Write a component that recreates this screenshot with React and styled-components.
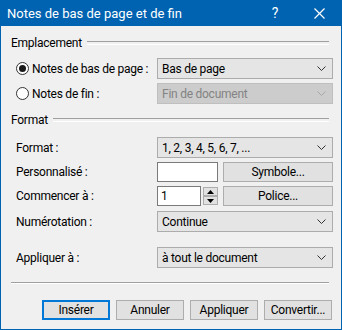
import React from "react";
import styled, { createGlobalStyle } from "styled-components";

const GlobalStyle = createGlobalStyle`
  html, body {
    margin: 0;
    padding: 0;
    background: #f0f0f0;
  }
  * {
    box-sizing: border-box;
  }
`;

const Fenetre = styled.div`
  width: 342px;
  height: 330px;
  background: #f0f0f0;
  border: 1px solid #0063b1;
  border-top: none;
  font-family: Roboto, "Noto Sans", sans-serif;
  font-size: 12px;
  letter-spacing: -0.25px;
  color: #000;
  display: flex;
  flex-direction: column;
`;

const BarreTitre = styled.div`
  height: 26px;
  margin: 0 -1px;
  background: #0063b1;
  color: #fff;
  display: flex;
  align-items: center;
  padding-left: 7px;
  font-size: 13px;
  letter-spacing: 0;
`;

const Titre = styled.span`
  flex: 1;
`;

const BoutonTitre = styled.div`
  width: ${(p) => p.$w}px;
  height: 26px;
  display: flex;
  align-items: center;
  justify-content: center;
  color: #fff;
  font-size: 14px;
`;

const Corps = styled.div`
  padding: 0 8px 0 10px;
  display: flex;
  flex-direction: column;
`;

const EnteteGroupe = styled.div`
  height: 14px;
  margin-top: ${(p) => p.$mt}px;
  margin-right: 4px;
  display: flex;
  align-items: center;
  gap: 5px;
  &::after {
    content: "";
    flex: 1;
    height: 2px;
    border-top: 1px solid #a0a0a0;
    border-bottom: 1px solid #ffffff;
  }
`;

const Ligne = styled.div`
  height: ${(p) => p.$h || 20}px;
  margin-top: ${(p) => p.$mt}px;
  padding-left: 5px;
  display: grid;
  grid-template-columns: 141px 176px;
  align-items: center;
`;

const Etiquette = styled.label`
  display: flex;
  align-items: center;
  white-space: nowrap;
`;

const Radio = styled.span`
  width: 13px;
  height: 13px;
  border-radius: 50%;
  border: 1px solid #333;
  background: #fff;
  margin-right: 3px;
  display: flex;
  align-items: center;
  justify-content: center;
  &::after {
    content: "";
    width: 7px;
    height: 7px;
    border-radius: 50%;
    background: ${(p) => (p.$coche ? "#1a1a1a" : "transparent")};
  }
`;

const Liste = styled.div`
  height: 100%;
  display: flex;
  align-items: center;
  justify-content: space-between;
  padding: 0 6px 0 4px;
  background: ${(p) => (p.$inactif ? "#cccccc" : "#e5e5e5")};
  border: 1px solid ${(p) => (p.$inactif ? "#bfbfbf" : "#acacac")};
  color: ${(p) => (p.$inactif ? "#838383" : "#000")};
`;

const Controles = styled.div`
  height: 100%;
  display: flex;
  align-items: center;
  gap: 5px;
`;

const Champ = styled.div`
  width: ${(p) => p.$w}px;
  height: 100%;
  background: #fff;
  color: #000;
  border: 1px solid #7a7a7a;
  padding-left: 3px;
  display: flex;
  align-items: center;
`;

const Toupie = styled.div`
  width: 15px;
  height: 100%;
  display: flex;
  flex-direction: column;
  justify-content: space-between;
  padding: 1px 0;
  margin-left: -3px;
`;

const FlecheToupie = styled.div`
  height: 9px;
  background: #e1e1e1;
  border: 1px solid #adadad;
  display: flex;
  align-items: center;
  justify-content: center;
`;

const Bouton = styled.div`
  width: ${(p) => p.$w || 68}px;
  height: 20px;
  background: #e1e1e1;
  border: ${(p) => (p.$defaut ? "2px solid #0078d7" : "1px solid #adadad")};
  display: flex;
  align-items: center;
  justify-content: center;
`;

const Separateur = styled.div`
  height: 2px;
  margin-top: 14px;
  margin-right: 4px;
  border-top: 1px solid #a0a0a0;
  border-bottom: 1px solid #fff;
`;

const BarreBoutons = styled.div`
  margin-top: 16px;
  display: flex;
  justify-content: flex-end;
  gap: 6px;
  padding-right: 1px;
`;

const Chevron = ({ inactif }) => (
  <svg width="9" height="5" viewBox="0 0 9 5">
    <path
      d="M0.5 0.5 L4.5 4.5 L8.5 0.5"
      fill="none"
      stroke={inactif ? "#a8a8a8" : "#333"}
      strokeWidth="1"
    />
  </svg>
);

const Triangle = ({ bas }) => (
  <svg width="7" height="4" viewBox="0 0 7 4">
    <path d={bas ? "M0 0 L7 0 L3.5 4 Z" : "M0 4 L7 4 L3.5 0 Z"} fill="#000" />
  </svg>
);

const ListeDeroulante = ({ valeur, inactif }) => (
  <Liste $inactif={inactif}>
    <span>{valeur}</span>
    <Chevron inactif={inactif} />
  </Liste>
);

const App = () => {
  return (
    <>
      <GlobalStyle />
      <Fenetre>
        <BarreTitre>
          <Titre>Notes de bas de page et de fin</Titre>
          <BoutonTitre $w={42}>?</BoutonTitre>
          <BoutonTitre $w={46}>
            <svg width="11" height="11" viewBox="0 0 11 11">
              <path d="M0.5 0.5 L10.5 10.5 M10.5 0.5 L0.5 10.5" stroke="#fff" strokeWidth="1.2" />
            </svg>
          </BoutonTitre>
        </BarreTitre>

        <Corps>
          <EnteteGroupe $mt={10}>Emplacement</EnteteGroupe>
          <Ligne $mt={8} $h={21}>
            <Etiquette>
              <Radio $coche />
              Notes de bas de page :
            </Etiquette>
            <ListeDeroulante valeur="Bas de page" />
          </Ligne>
          <Ligne $mt={4} $h={21}>
            <Etiquette>
              <Radio />
              Notes de fin :
            </Etiquette>
            <ListeDeroulante valeur="Fin de document" inactif />
          </Ligne>

          <EnteteGroupe $mt={9}>Format</EnteteGroupe>
          <Ligne $mt={10} $h={21}>
            <Etiquette>Format :</Etiquette>
            <ListeDeroulante valeur="1, 2, 3, 4, 5, 6, 7, ..." />
          </Ligne>
          <Ligne $mt={4}>
            <Etiquette>Personnalisé :</Etiquette>
            <Controles>
              <Champ $w={61} />
              <Bouton $w={110}>Symbole...</Bouton>
            </Controles>
          </Ligne>
          <Ligne $mt={4}>
            <Etiquette>Commencer à :</Etiquette>
            <Controles>
              <Champ $w={44}>1</Champ>
              <Toupie>
                <FlecheToupie>
                  <Triangle />
                </FlecheToupie>
                <FlecheToupie>
                  <Triangle bas />
                </FlecheToupie>
              </Toupie>
              <Bouton $w={110}>Police...</Bouton>
            </Controles>
          </Ligne>
          <Ligne $mt={5} $h={21}>
            <Etiquette>Numérotation :</Etiquette>
            <ListeDeroulante valeur="Continue" />
          </Ligne>
          <Ligne $mt={15} $h={21}>
            <Etiquette>Appliquer à :</Etiquette>
            <ListeDeroulante valeur="à tout le document" />
          </Ligne>

          <Separateur />

          <BarreBoutons>
            <Bouton $defaut>Insérer</Bouton>
            <Bouton>Annuler</Bouton>
            <Bouton>Appliquer</Bouton>
            <Bouton>Convertir...</Bouton>
          </BarreBoutons>
        </Corps>
      </Fenetre>
    </>
  );
};

export default App;
